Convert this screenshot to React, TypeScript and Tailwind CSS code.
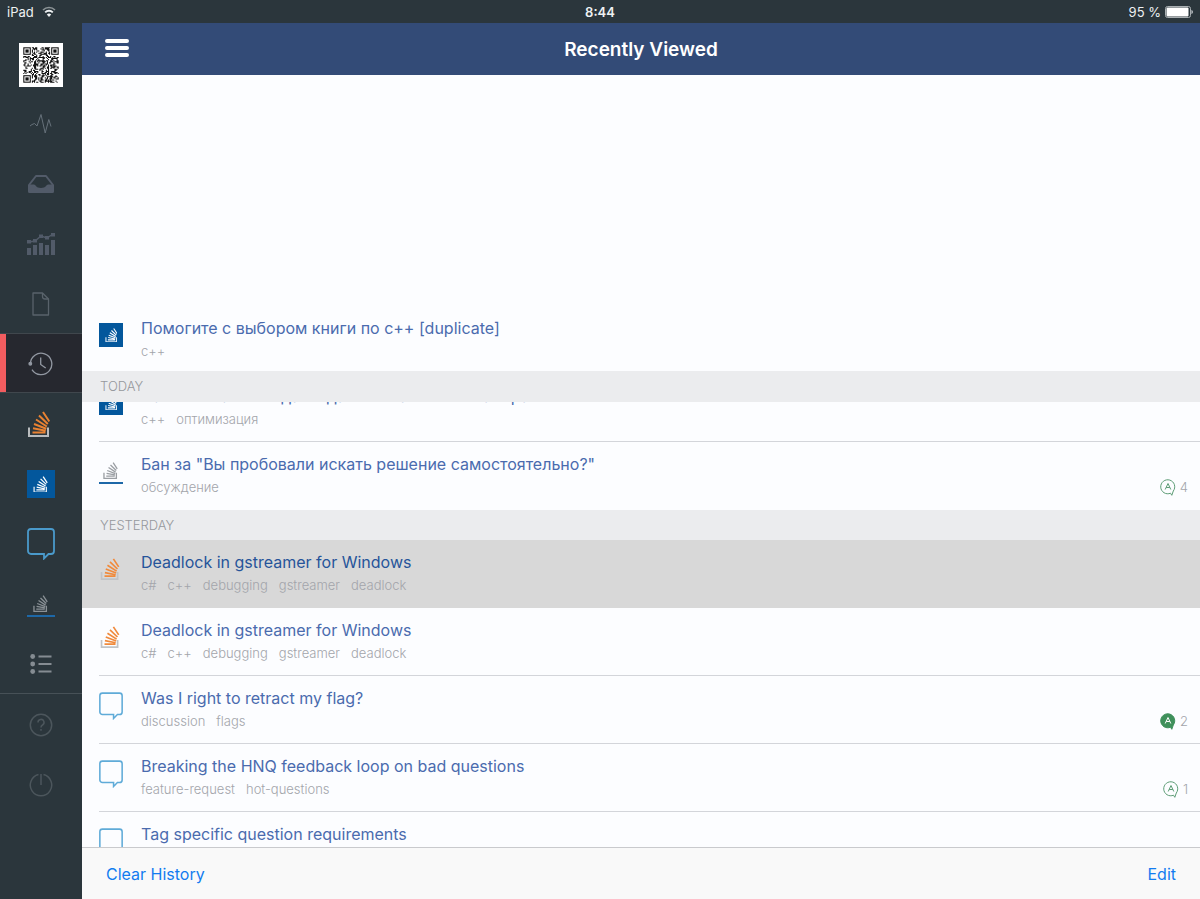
import type { ReactNode } from "react";
import clsx from "clsx";

type SiteIcon = "overflow" | "russian" | "meta" | "russianMeta";

interface Answers {
  count: number;
  accepted: boolean;
}

interface Question {
  id: number;
  site: SiteIcon;
  title: string;
  tags: string[];
  answers?: Answers;
  selected?: boolean;
}

const earlier: Question[] = [
  { id: 1, site: "russian", title: "Помогите с выбором книги по c++ [duplicate]", tags: ["c++"] },
];

const today: Question[] = [
  { id: 2, site: "russian", title: "Наименование вида из данных на основе набора", tags: ["c++", "оптимизация"] },
  {
    id: 3,
    site: "russianMeta",
    title: 'Бан за "Вы пробовали искать решение самостоятельно?"',
    tags: ["обсуждение"],
    answers: { count: 4, accepted: false },
  },
];

const deadlockTags = ["c#", "c++", "debugging", "gstreamer", "deadlock"];

const yesterday: Question[] = [
  { id: 4, site: "overflow", title: "Deadlock in gstreamer for Windows", tags: deadlockTags, selected: true },
  { id: 5, site: "overflow", title: "Deadlock in gstreamer for Windows", tags: deadlockTags },
  {
    id: 6,
    site: "meta",
    title: "Was I right to retract my flag?",
    tags: ["discussion", "flags"],
    answers: { count: 2, accepted: true },
  },
  {
    id: 7,
    site: "meta",
    title: "Breaking the HNQ feedback loop on bad questions",
    tags: ["feature-request", "hot-questions"],
    answers: { count: 1, accepted: false },
  },
  { id: 8, site: "meta", title: "Tag specific question requirements", tags: [] },
];

export default function App() {
  return (
    <div className="flex h-screen flex-col overflow-hidden bg-[#2b363c] font-['Inter','Noto_Sans',sans-serif]">
      <StatusBar />
      <div className="flex min-h-0 flex-1">
        <Sidebar />
        <main className="flex min-w-0 flex-1 flex-col bg-[#fcfdff]">
          <header className="grid h-[52px] shrink-0 grid-cols-[1fr_auto_1fr] items-center bg-[#334b77] px-[23px] text-white">
            <button type="button" aria-label="Menu" className="justify-self-start pb-0.5">
              <svg width="24" height="20" viewBox="0 0 24 20" className="block">
                <path d="M2 3h20M2 10h20M2 17h20" stroke="white" strokeWidth="4" strokeLinecap="round" />
              </svg>
            </button>
            <h1 className="pt-0.5 text-[19px] leading-6 font-semibold">Recently Viewed</h1>
          </header>

          <div className="min-h-0 flex-1 overflow-hidden pt-[231px]">
            <QuestionList questions={earlier} />
            {/* the pinned header lies over the rows on both sides of it */}
            <div className="relative z-10 -mt-[3px] -mb-7 bg-[#ebecee] pb-px">
              <SectionHeader>TODAY</SectionHeader>
            </div>
            <QuestionList questions={today} />
            <SectionHeader>YESTERDAY</SectionHeader>
            <QuestionList questions={yesterday} />
          </div>

          <footer className="flex h-[52px] shrink-0 items-center justify-between border-t border-[#c9cacd] bg-[#f9f9f9] px-6 text-[16px] leading-6 text-[#127cf0]">
            <button type="button">Clear History</button>
            <button type="button">Edit</button>
          </footer>
        </main>
      </div>
    </div>
  );
}

function StatusBar() {
  return (
    <div className="grid h-[23px] shrink-0 grid-cols-[1fr_auto_1fr] items-center px-[7px] text-[13px] leading-5 text-[#eef1f2]">
      <div className="flex items-center gap-2">
        iPad
        <svg width="14" height="11" viewBox="0 0 14 11" fill="none" stroke="currentColor">
          <path d="M1 4a8.6 8.6 0 0 1 12 0" strokeWidth="1.6" opacity="0.5" />
          <path d="M3.2 6.3a5.4 5.4 0 0 1 7.6 0" strokeWidth="1.9" />
          <path d="M7 11 4.8 8.6a3.2 3.2 0 0 1 4.4 0z" fill="currentColor" stroke="none" />
        </svg>
      </div>
      <span className="font-semibold">8:44</span>
      <div className="flex items-center justify-end gap-1">
        95 %
        <svg width="28" height="12" viewBox="0 0 28 12">
          <rect x="0.5" y="0.5" width="25" height="11" rx="2" fill="none" stroke="#a9afb2" />
          <rect x="1.5" y="1.5" width="22" height="9" rx="1" fill="white" />
          <path d="M26.5 4v4c.8-.3 1.3-1 1.3-2s-.5-1.700-1.300-2z" fill="#d5d9db" />
        </svg>
      </div>
    </div>
  );
}

function Sidebar() {
  return (
    <nav className="w-[82px] shrink-0">
      <div className="flex h-[70px] items-center justify-center pt-[13px]">
        <QrAvatar />
      </div>
      <SidebarItem label="Activity">
        <svg width="24" height="22" viewBox="0 0 24 22" fill="none" stroke="#66717a" strokeLinejoin="round">
          <path d="M1 13 3 11.500 5.500 10.500 8 13 12 1.500 16.200 20 19.800 6.500 22 13.500" />
        </svg>
      </SidebarItem>
      <SidebarItem label="Inbox">
        <svg width="28" height="20" viewBox="0 0 28 20">
          <path d="M2 11 9 2h10l7 9" fill="none" stroke="#525b69" strokeWidth="2" strokeLinejoin="round" />
          <path d="M1 10.500h6c1.500 0 2 3.500 7 3.500s5.500-3.500 7-3.500h6v7a1.500 1.500 0 0 1-1.500 1.500h-23A1.500 1.500 0 0 1 1 17.500z" fill="#525b69" />
        </svg>
      </SidebarItem>
      <SidebarItem label="Reputation">
        <svg width="28" height="24" viewBox="0 0 28 24" fill="#525b69">
          <path d="M0 16h4v7H0zM6 13h4v10H6zM12 11h4v12h-4zM18 13h4v10h-4zM24 8h4v15h-4z" />
          <path d="M0 8h4v3.500H0zM6 7h4v3.500H6zM12 2.500h4V6h-4zM18 4h4v3.500h-4zM24 1h4v3.500h-4z" />
          <path d="M2 10 8 9l6-5 6 2 6-4" fill="none" stroke="#525b69" strokeWidth="1.500" />
        </svg>
      </SidebarItem>
      <SidebarItem label="Documents">
        <svg width="18" height="24" viewBox="0 0 18 24" fill="none" stroke="#59636b" strokeWidth="1.300">
          <path d="M1 1h9.500L16.500 7v16H1z" strokeLinejoin="round" />
          <path d="M10.500 1v3.500A2.500 2.500 0 0 0 13 7h3.500" />
        </svg>
      </SidebarItem>
      <SidebarItem label="Recently viewed" active>
        <svg width="26" height="24" viewBox="0 0 26 24" fill="none" stroke="#9298a2" strokeWidth="1.300">
          <path d="M2.400 12A10.700 10.700 0 1 1 4 17.600" />
          <circle cx="2.300" cy="11.800" r="1.300" fill="#9298a2" />
          <path d="M12.700 5.500V12.500l5 3.500" />
        </svg>
      </SidebarItem>
      <SidebarItem label="Stack Overflow">
        <StackLogo bars="#e98232" tray="#b9bcbe" className="mr-1 h-[26px] w-[22px]" />
      </SidebarItem>
      <SidebarItem label="Stack Overflow на русском">
        <RussianSite className="size-7" />
      </SidebarItem>
      <SidebarItem label="Meta Stack Exchange">
        <Bubble className="h-[32px] w-7" stroke="#4a9acb" />
      </SidebarItem>
      <SidebarItem label="Stack Overflow на русском Meta">
        <RussianMetaSite className="mt-1 w-7" color="#8a9196" />
      </SidebarItem>
      <SidebarItem label="All sites">
        <svg width="22" height="20" viewBox="0 0 22 20" fill="#858c92">
          <circle cx="2.700" cy="2.500" r="2.400" />
          <circle cx="2.700" cy="10" r="2.400" />
          <circle cx="2.700" cy="17.500" r="2.400" />
          <path d="M8.500 1.500h13v2h-13zM8.500 9h13v2h-13zM8.500 16.500h13v2h-13z" />
        </svg>
      </SidebarItem>
      <div className="border-t border-[#475157]">
        <SidebarItem label="Help">
          <svg width="24" height="24" viewBox="0 0 24 24" fill="none" stroke="#4c565c" strokeWidth="1.500">
            <circle cx="12" cy="12" r="10.700" />
            <path d="M9 9.500a3 3 0 1 1 4.500 2.500c-1 .6-1.500 1.200-1.500 2.500M12 16v1.800" />
          </svg>
        </SidebarItem>
        <SidebarItem label="Log out">
          <svg width="24" height="24" viewBox="0 0 24 24" fill="none" stroke="#4c565c" strokeWidth="1.500">
            <path d="M9.500 1.600a10.700 10.700 0 1 0 5 0M12 1v11" />
          </svg>
        </SidebarItem>
      </div>
    </nav>
  );
}

interface SidebarItemProps {
  label: string;
  active?: boolean;
  children: ReactNode;
}

function SidebarItem({ label, active, children }: SidebarItemProps) {
  return (
    <button
      type="button"
      aria-label={label}
      className={clsx(
        "relative flex h-[60px] w-full items-center justify-center pt-0.5",
        active && "border-y border-[#40474d] bg-[#26282f]",
      )}
    >
      {active ? <span className="absolute inset-y-0 left-0 w-[6px] bg-[#f25c5f]" /> : null}
      {children}
    </button>
  );
}

function SectionHeader({ children }: { children: string }) {
  return (
    <h2 className="flex h-[30px] items-center bg-[#ebecee] pl-[18px] text-[13px] leading-5 font-light text-[#96989d]">
      {children}
    </h2>
  );
}

function QuestionList({ questions }: { questions: Question[] }) {
  return (
    <ul>
      {questions.map((question) => (
        <QuestionRow key={question.id} question={question} />
      ))}
    </ul>
  );
}

function QuestionRow({ question }: { question: Question }) {
  const { site, title, tags, answers, selected } = question;
  return (
    <li className={clsx("group/row pl-[17px]", selected && "bg-[#d8d8d8]")}>
      <a
        href="#question"
        className={clsx(
          "flex h-[68px] gap-[18px] border-b pr-3 group-last/row:border-transparent",
          selected ? "border-transparent" : "border-[#d3d5da]",
        )}
      >
        <span className="flex w-6 shrink-0 items-start justify-center pt-4">
          <SiteLogo site={site} />
        </span>
        <div className="min-w-0 flex-1 pt-[10px]">
          <p className={clsx("truncate text-[16px] leading-6", selected ? "text-[#26549a]" : "text-[#4a6bae]")}>
            {title}
          </p>
          <div className="flex items-center text-[13px] leading-[22px] font-light text-[#a3a5ab]">
            <div className="flex flex-1 gap-[11px]">
              {tags.map((tag) => (
                <span key={tag}>{tag}</span>
              ))}
            </div>
            {answers ? <AnswerCount {...answers} /> : null}
          </div>
        </div>
      </a>
    </li>
  );
}

function AnswerCount({ count, accepted }: Answers) {
  return (
    <span className="flex items-center gap-1">
      <svg width="16" height="18" viewBox="0 0 16 18" strokeLinejoin="round">
        <path
          d="M11.800 17.300 10.500 15.200A7 7 0 1 1 13.300 13z"
          fill={accepted ? "#3f905b" : "none"}
          stroke={accepted ? "#3f905b" : "#5c9c75"}
        />
        <path d="M5.200 11.500 8 5.500 10.800 11.500M6.200 9.500h3.600" fill="none" stroke={accepted ? "white" : "#5c9c75"} />
      </svg>
      {count}
    </span>
  );
}

function SiteLogo({ site }: { site: SiteIcon }) {
  switch (site) {
    case "overflow":
      return <StackLogo bars="#f08a3c" tray="#c1c3c6" className="mt-0.5 mr-0.5 h-[22px] w-5" />;
    case "russian":
      return <RussianSite className="mt-px size-6" />;
    case "meta":
      return <Bubble className="h-[28px] w-6" stroke="#5fabd8" />;
    case "russianMeta":
      return <RussianMetaSite className="mt-1 w-6" color="#9a9ea3" />;
  }
}

interface StackLogoProps {
  bars: string;
  tray: string;
  className?: string;
}

function StackLogo({ bars, tray, className }: StackLogoProps) {
  return (
    <svg viewBox="0 0 22 26" className={className} fill="none">
      <path d="M1 16.500V25h19v-8.500" stroke={tray} strokeWidth="2" />
      <path
        d="M4.500 21.500h13M5 17.300 17.700 19.800M6 13 18.300 17.800M8 8.500 18.800 15.500M11 4.500 19.800 13M15 1 21.300 10.500"
        stroke={bars}
        strokeWidth="2"
      />
    </svg>
  );
}

function RussianSite({ className }: { className?: string }) {
  return (
    <span className={clsx("flex items-center justify-center bg-[#03579c]", className)}>
      <StackLogo bars="#ffffff" tray="#dfe9f2" className="h-[60%] w-[54%]" />
    </span>
  );
}

function RussianMetaSite({ className, color }: { className?: string; color: string }) {
  return (
    <span className={clsx("flex justify-center border-b-2 border-[#1d68a8] pb-[3px]", className)}>
      <StackLogo bars={color} tray={color} className="mr-0.5 h-[17px] w-[15px]" />
    </span>
  );
}

function Bubble({ className, stroke }: { className?: string; stroke: string }) {
  return (
    <svg viewBox="0 0 28 32" className={className} fill="none" stroke={stroke} strokeWidth="1.800">
      <path d="M4 1h20a3 3 0 0 1 3 3v19a3 3 0 0 1-3 3h-2.500L17 30.500V26H4a3 3 0 0 1-3-3V4a3 3 0 0 1 3-3z" />
    </svg>
  );
}

const QR_SIZE = 33;

function buildQrPath() {
  let seed = 7919;
  let path = "";
  for (let y = 0; y < QR_SIZE; y++) {
    for (let x = 0; x < QR_SIZE; x++) {
      seed = (seed * 1103515245 + 12345) % 2147483648;
      const inFinder = (x < 8 && y < 8) || (x > QR_SIZE - 9 && y < 8) || (x < 8 && y > QR_SIZE - 9);
      if (!inFinder && seed / 2147483648 > 0.48) path += `M${x} ${y}h1v1h-1z`;
    }
  }
  return path;
}

const qrPath = buildQrPath();

function QrAvatar() {
  const corners = [
    [0, 0],
    [QR_SIZE - 7, 0],
    [0, QR_SIZE - 7],
  ];
  return (
    <svg width="44" height="44" viewBox="-4 -4 41 41" className="bg-white">
      <path d={qrPath} fill="#111111" />
      {corners.map(([x, y]) => (
        <g key={`${x}-${y}`}>
          <rect x={x + 0.5} y={y + 0.5} width="6" height="6" fill="none" stroke="#111111" />
          <rect x={x + 2} y={y + 2} width="3" height="3" fill="#111111" />
        </g>
      ))}
    </svg>
  );
}
